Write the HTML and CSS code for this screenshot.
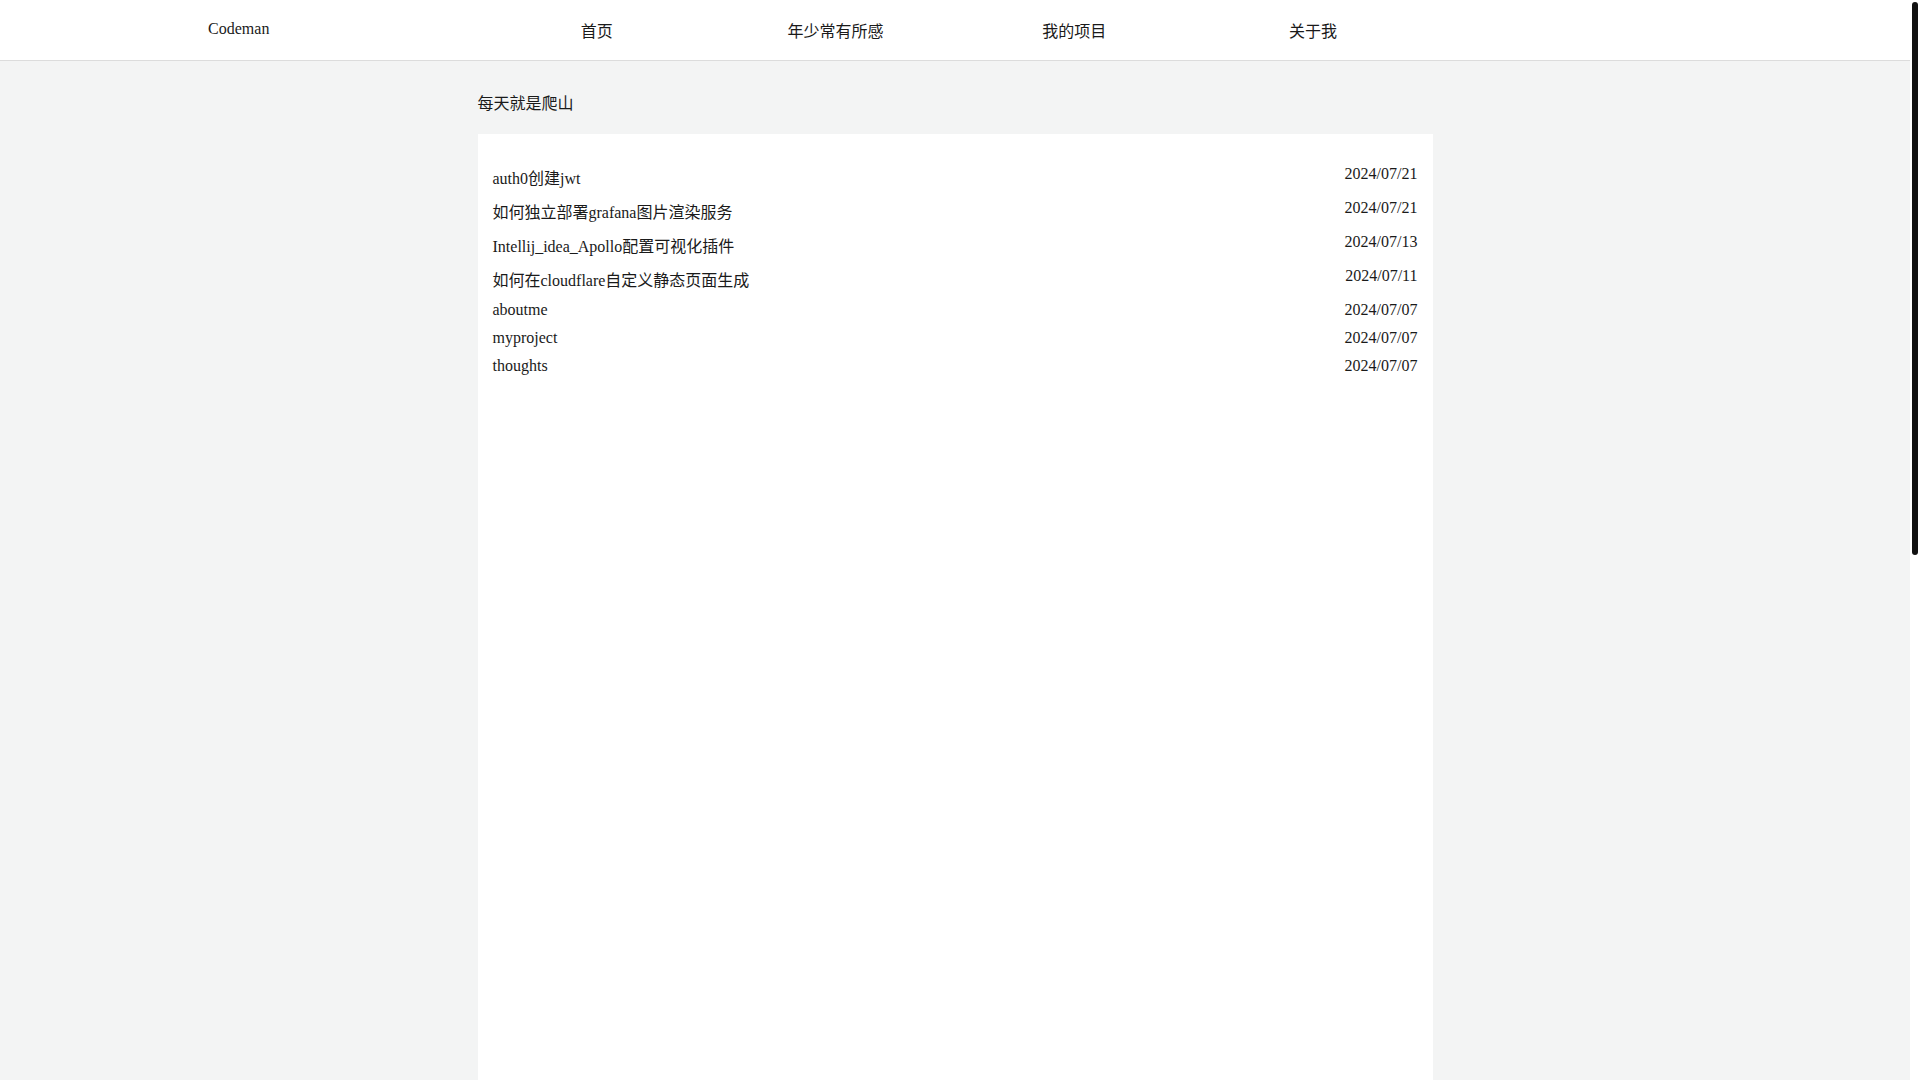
FILE: index.html
```html
<!DOCTYPE html>
<html lang="zh-CN">
<head>
<meta charset="utf-8">
<title>Codeman</title>
<link rel="stylesheet" href="styles.css">
</head>
<body>
<div class="page">
<header class="topbar">
  <div class="brand">Codeman</div>
  <nav class="nav">
    <a class="nav-item" href="#">首页</a>
    <a class="nav-item" href="#">年少常有所感</a>
    <a class="nav-item" href="#">我的项目</a>
    <a class="nav-item" href="#">关于我</a>
  </nav>
  <div class="topbar-end"></div>
</header>
<main class="main">
  <div class="page-title">每天就是爬山</div>
  <section class="card">
    <ul class="post-list">
      <li class="post"><a class="post-title" href="#">auth0创建jwt</a><span class="post-date">2024/07/21</span></li>
      <li class="post"><a class="post-title" href="#">如何独立部署grafana图片渲染服务</a><span class="post-date">2024/07/21</span></li>
      <li class="post"><a class="post-title" href="#">Intellij_idea_Apollo配置可视化插件</a><span class="post-date">2024/07/13</span></li>
      <li class="post"><a class="post-title" href="#">如何在cloudflare自定义静态页面生成</a><span class="post-date">2024/07/11</span></li>
      <li class="post"><a class="post-title" href="#">aboutme</a><span class="post-date">2024/07/07</span></li>
      <li class="post"><a class="post-title" href="#">myproject</a><span class="post-date">2024/07/07</span></li>
      <li class="post"><a class="post-title" href="#">thoughts</a><span class="post-date">2024/07/07</span></li>
    </ul>
  </section>
</main>
</div>
<div class="scrollbar" aria-hidden="true"><div class="scrollbar-thumb"></div></div>
</body>
</html>
```

FILE: styles.css
```css
html,
body {
  height: 100%;
}
body {
  margin: 0;
  overflow: hidden;
  display: flex;
  background: #f3f4f4;
  color: #1a1a1a;
  font-family: "Liberation Serif", "Noto Sans CJK SC", serif;
  font-size: 16px;
}
.page {
  flex: 1;
  min-width: 0;
  height: 100vh;
  overflow-y: auto;
  scrollbar-width: none;
}
.page::-webkit-scrollbar {
  display: none;
}
.scrollbar {
  flex: 0 0 10px;
  height: 100vh;
  background: #ffffff;
  padding: 2px 2px 0;
  box-sizing: border-box;
}
.scrollbar-thumb {
  height: 553px;
  background: #111111;
  border-radius: 3px;
}
a {
  color: inherit;
  text-decoration: none;
}
.topbar {
  display: grid;
  grid-template-columns: 1fr 2fr 1fr;
  align-items: center;
  height: 60px;
  background: #ffffff;
  border-bottom: 1px solid #dcdcdc;
}
.brand {
  text-align: center;
  padding-bottom: 2px;
}
.nav {
  display: grid;
  grid-template-columns: repeat(4, 1fr);
}
.nav-item {
  text-align: center;
  font-family: "Noto Sans CJK SC", sans-serif;
}
.main {
  width: 50%;
  margin: 0 auto;
  padding-top: 28.5px;
}
.page-title {
  font-family: "Noto Sans CJK SC", sans-serif;
  margin-bottom: 20px;
}
.card {
  background: #ffffff;
  padding: 15px;
  min-height: 1946px;
}
.post-list {
  list-style: none;
  margin: 16px 0;
  padding: 0;
}
.post {
  display: flex;
  justify-content: space-between;
  margin-bottom: 10px;
}
```
